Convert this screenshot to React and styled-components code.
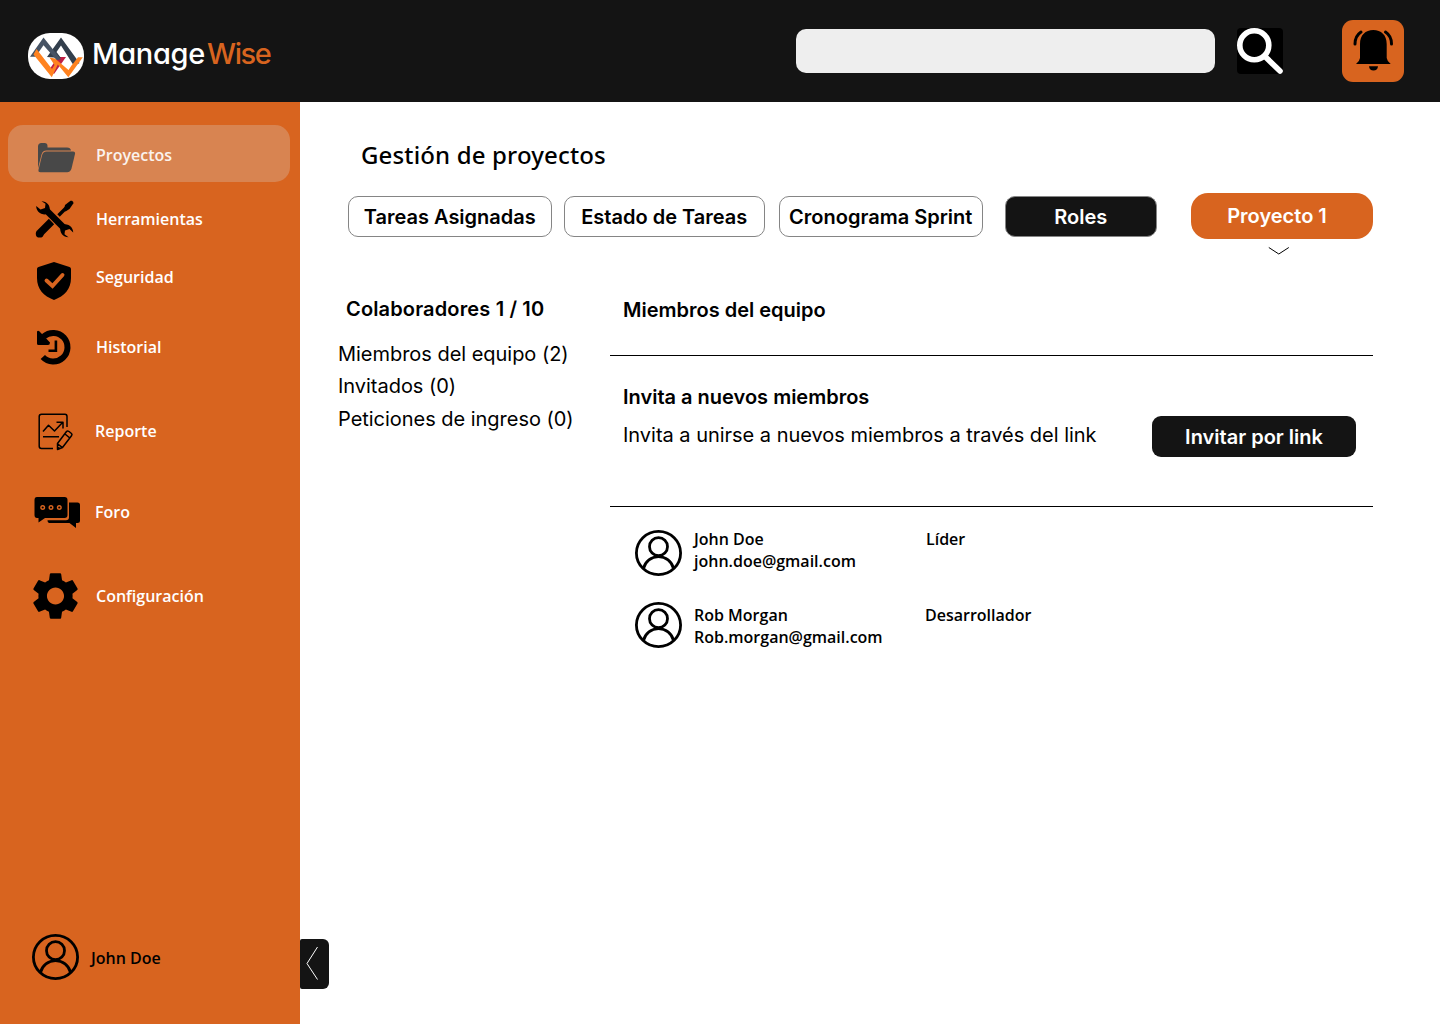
import React from 'react';
import styled, { createGlobalStyle } from 'styled-components';
import { MdSettings } from 'react-icons/md';

const ORANGE = '#d8641f';
const INK = '#141414';

const GlobalStyle = createGlobalStyle`
  * { box-sizing: border-box; }
  body { margin: 0; background: #fff; color: #000; font-family: 'Open Sans', 'Noto Sans', sans-serif; }
  button { font: inherit; color: inherit; background: none; border: 0; padding: 0; }
  h1, h2, h3, p, ul { margin: 0; padding: 0; font: inherit; }
  ul { list-style: none; }
  svg { display: block; flex: none; overflow: visible; }
`;

const Page = styled.div`
  display: grid;
  grid-template: 102px 922px / 300px 1140px;
  width: 1440px;
  height: 1024px;
  overflow: hidden;
`;

const Header = styled.header`
  grid-column: 1 / -1;
  display: flex;
  align-items: flex-start;
  background: ${INK};
`;

const Brand = styled.div`
  display: flex;
  align-items: flex-start;
  width: 796px;
  padding: 33px 0 0 28px;
`;

const Wordmark = styled.div`
  margin: 1px 0 0 8px;
  color: #fff;
  font: 500 29px/40px Inter, sans-serif;
  font-feature-settings: 'cv11' 1;
  letter-spacing: -0.3px;
  white-space: nowrap;
  span {
    margin-left: 2px;
    color: ${ORANGE};
    letter-spacing: -1.4px;
  }
`;

const SearchField = styled.input`
  width: 419px;
  height: 44px;
  margin: 29px 22px 0 0;
  border: 0;
  border-radius: 10px;
  background: #eee;
`;

const SearchButton = styled.button`
  width: 46px;
  height: 46px;
  margin: 28px 59px 0 0;
  border-radius: 4px;
  background: #000;
`;

const BellButton = styled.button`
  width: 62px;
  height: 62px;
  margin-top: 20px;
  border-radius: 11px;
  background: ${ORANGE};
`;

const Sidebar = styled.aside`
  display: flex;
  flex-direction: column;
  justify-content: space-between;
  padding: 23px 10px 44px 8px;
  background: ${ORANGE};
`;

const NavItem = styled.li`
  display: flex;
  align-items: center;
  height: ${(p) => p.$height}px;
  margin-top: ${(p) => p.$gap || 0}px;
  padding-left: 18px;
  border-radius: 15px;
  background: ${(p) => (p.$active ? 'rgba(217, 217, 217, 0.27)' : 'transparent')};
  color: ${(p) => (p.$active ? '#fbf3ee' : '#fff')};
`;

const NavLabel = styled.span`
  padding: ${(p) => p.$pad || '0'};
  margin-left: ${(p) => p.$left || 10}px;
  font-size: 16px;
  font-weight: 600;
  line-height: 22px;
`;

const Profile = styled.div`
  display: flex;
  align-items: flex-end;
  gap: 12px;
  padding-left: 24px;
  font-size: 16px;
  font-weight: 600;
  line-height: 22px;
  span { padding-bottom: 11px; }
`;

const Main = styled.main`
  display: grid;
  grid-template-columns: 38px 1fr;
`;

const CollapseButton = styled.button`
  width: 29px;
  height: 50px;
  margin-top: 837px;
  border-radius: 2px 6px 6px 2px;
  background: ${INK};
`;

const Content = styled.div`
  padding-top: 36px;
`;

const Title = styled.h1`
  padding-left: 23px;
  font: 500 24px/34px 'Noto Sans', 'Open Sans', sans-serif;
  letter-spacing: 0.15px;
`;

const Tabs = styled.nav`
  display: flex;
  align-items: flex-start;
  padding: 21px 0 0 10px;
`;

const Tab = styled.button`
  width: ${(p) => p.$width}px;
  height: 41px;
  margin: 3px ${(p) => p.$after}px 0 0;
  padding-right: 0.5px;
  border: 1px solid #858585;
  border-radius: 10px;
  background: ${(p) => (p.$active ? INK : '#fff')};
  color: ${(p) => (p.$active ? '#fff' : '#000')};
  font: 600 20px/24px Inter, sans-serif;
  white-space: nowrap;
`;

const ProjectPicker = styled.div`
  width: 182px;
  svg { margin: 8px 0 0 77px; }
`;

const ProjectButton = styled.button`
  width: 182px;
  height: 46px;
  padding-right: 10px;
  border-radius: 17px;
  background: ${ORANGE};
  color: #fff;
  font: 600 20px/24px Inter, sans-serif;
`;

const Columns = styled.div`
  display: grid;
  grid-template-columns: 272px 763px;
  padding-top: 42px;
`;

const Heading = styled.h2`
  padding-left: ${(p) => p.$left}px;
  font: 600 20px/24px Inter, sans-serif;
  letter-spacing: ${(p) => p.$spacing || '0'};
`;

const Summary = styled.section`
  ul { padding-top: 21px; }
  li {
    padding-bottom: 8px;
    font: 400 20px/24px Inter, sans-serif;
    letter-spacing: -0.03px;
    white-space: nowrap;
  }
  li + li { padding-bottom: 9px; }
`;

const Team = styled.section`
  padding-top: 1px;
`;

const InviteBlock = styled.div`
  display: flex;
  justify-content: space-between;
  height: 152px;
  margin-top: 33px;
  padding: 29px 17px 0 0;
  border: solid #000;
  border-width: 1px 0;
`;

const InviteText = styled.p`
  padding: 14px 0 0 13px;
  font: 400 20px/24px Inter, sans-serif;
  letter-spacing: -0.02px;
  white-space: nowrap;
`;

const InviteButton = styled.button`
  width: 204px;
  height: 41px;
  margin-top: 31px;
  border-radius: 9px;
  background: ${INK};
  color: #fff;
  font: 600 20px/24px Inter, sans-serif;
`;

const Member = styled.li`
  display: grid;
  grid-template-columns: 59px ${(p) => p.$roleAt}px 1fr;
  height: 46px;
  margin-top: ${(p) => p.$gap}px;
  padding-left: 25px;
  font-size: 16px;
  font-weight: 600;
  line-height: 22px;
`;

const MemberText = styled.p`
  margin-top: ${(p) => p.$top}px;
  white-space: nowrap;
`;

function Logo() {
  return (
    <svg width="56" height="46" viewBox="0 0 56 46">
      <rect width="56" height="46" rx="22" fill="#fff" />
      <path d="M30 24H38L26 41 21 37Z" fill="#c01f45" />
      <path d="M19 24 33 4.500 51.500 30 46 33 33 12.500 28.500 19 33 25Z" fill="#323e4c" />
      <path d="M2 23.700 15.500 4.500 33 26.500 28.500 27 15.500 12.300 7.500 23.700Z" fill="#465364" />
      <path d="M5.500 21.500 8.500 16 24 36 26.500 32 21.500 24.500 27 25.500 40.500 37 43.500 32.500 50 24.300H54.800L40.300 44.300 29.800 31.500 23.800 44.300Z" fill="#ff821f" />
    </svg>
  );
}

function UserIcon() {
  return (
    <svg width="47" height="46" viewBox="0 0 47 46" fill="none" stroke="#000" strokeWidth="2.800">
      <ellipse cx="23.500" cy="23" rx="22.100" ry="21.700" />
      <circle cx="23.500" cy="16.700" r="9" />
      <path d="M8.500 38.500A15.400 15.400 0 0 1 38.500 38.500" />
    </svg>
  );
}

const Icon = ({ children }) => (
  <svg width="60" height="56" viewBox="0 0 60 56">{children}</svg>
);

const FolderIcon = () => (
  <Icon>
    <g fill="#484848" transform="translate(0 .5)">
      <path d="M12 42V20q0-3.500 3.500-3.500h3q3 0 3 3V21H41q3.500 0 4 3H20.500q-4 0-5 4Z" />
      <path d="M20.500 25H47q2.500 0 2 2.500L45.500 42q-.9 3.700-4.500 3.700H14.500q-2.500 0-2-2.500L16 29q1-4 4.500-4Z" />
    </g>
  </Icon>
);

const ToolsIcon = () => (
  <Icon>
    <path d="M25.500 30.500 14 42" stroke="#000" strokeWidth="7.500" />
    <circle cx="13.700" cy="42.700" r="3.900" />
    <path d="M32.500 24.500 40.500 16.500" stroke="#000" strokeWidth="3.400" />
    <path d="M38 19 39 14 44.500 9.800H46L47.300 11V12.500L43.500 18 39.500 20.500Z" />
    <path d="M19 18 39 38" stroke="#000" strokeWidth="6.500" />
    <path d="M15.500 10.200A8.200 8.200 0 0 1 23.500 20.500L21 23A8.200 8.200 0 0 1 10.200 15L14.500 18.500 19 17 19.500 12.800Z" />
    <path d="M42.500 46.300A8.200 8.200 0 0 1 34.500 36L37 33.500A8.200 8.200 0 0 1 47.200 41.500L43.500 38 39 39.500 38.500 43.300Z" />
  </Icon>
);

const ShieldIcon = () => (
  <Icon>
    <path d="M28 13 43.500 18Q45 18.300 45 20V29C45 40 38.500 47 28 51 17.500 47 11 40 11 29V20Q11 18.300 12.500 18Z" />
    <path d="M20.500 31.500 26.500 37 36.500 26" fill="none" stroke={ORANGE} strokeWidth="3.900" strokeLinecap="round" />
  </Icon>
);

const HistoryIcon = () => (
  <Icon>
    <path d="M16.800 38A14.300 14.300 0 1 0 17.700 17.500" fill="none" stroke="#000" strokeWidth="6" />
    <path d="M11 12.500Q12 11 13.300 12.300L24 23.500Q24 26 22 26H12.500Q11 26 11 24.500Z" />
    <path d="M29.900 21.500V31.800H22.500" fill="none" stroke="#000" strokeWidth="2.600" />
  </Icon>
);

const ReportIcon = () => (
  <Icon>
    <g fill="none" stroke="#000" strokeWidth="1.500" strokeLinejoin="round">
      <path d="M27 45.500H15.500Q13.200 45.500 13.200 43.300V13.500Q13.200 11.200 15.500 11.200H39Q41 11.200 41 13.500V24" />
      <path d="M17 28.500 22.500 22.300 28.500 28 37 19M30.500 19.300H37V25.500M17 33.700H33" />
      <path d="M31.500 46.500V40.500L40.500 28.500Q41.500 27.500 43 28.500L45.500 30.500Q46.500 31.500 45.500 32.800L36.500 44.500ZM39 31 43.500 34.800M31.800 41 36.200 44.300M31.600 44.300 34 45.500" />
    </g>
  </Icon>
);

const ForumIcon = () => (
  <Icon>
    <g transform="translate(0 1)">
      <path d="M43 17.500H51.500Q54 17.500 54 20V35.500Q54 38 51.500 38H50V43L43.500 38H24Q21.500 38 21.500 35.200H40Q43 35.200 43 32Z" />
      <path d="M11 12H38.500Q41.500 12 41.500 15V30Q41.500 33 38.500 33H19L12.500 37.500V33H11Q8.500 33 8.500 30V15Q8.500 12 11 12Z" />
      <g fill="none" stroke={ORANGE} strokeWidth="1.400">
        <circle cx="16.700" cy="22.500" r="1.800" />
        <circle cx="25" cy="22.500" r="1.800" />
        <circle cx="33.300" cy="22.500" r="1.800" />
      </g>
    </g>
  </Icon>
);

const GearIcon = () => (
  <Icon><MdSettings x="1" y="-0.500" size={57} color="#000" /></Icon>
);

const NAV = [
  { label: 'Proyectos', icon: FolderIcon, height: 57, active: true, pad: '3px 0 0' },
  { label: 'Herramientas', icon: ToolsIcon, height: 58, gap: 8 },
  { label: 'Seguridad', icon: ShieldIcon, height: 58 },
  { label: 'Historial', icon: HistoryIcon, height: 58, gap: 12 },
  { label: 'Reporte', icon: ReportIcon, height: 58, gap: 26, left: 9 },
  { label: 'Foro', icon: ForumIcon, height: 58, gap: 23, left: 9 },
  { label: 'Configuración', icon: GearIcon, height: 58, gap: 26 },
];

const TABS = [
  { label: 'Tareas Asignadas', width: 204, after: 12 },
  { label: 'Estado de Tareas', width: 201, after: 14 },
  { label: 'Cronograma Sprint', width: 204, after: 22 },
  { label: 'Roles', width: 152, after: 34, active: true },
];

const MEMBERS = [
  { name: 'John Doe', email: 'john.doe@gmail.com', role: 'Líder', gap: 23, top: -2, roleAt: 232 },
  { name: 'Rob Morgan', email: 'Rob.morgan@gmail.com', role: 'Desarrollador', gap: 26, top: 2, roleAt: 231 },
];

export default function App() {
  return (
    <Page>
      <GlobalStyle />
      <Header>
        <Brand>
          <Logo />
          <Wordmark>Manage<span>Wise</span></Wordmark>
        </Brand>
        <SearchField aria-label="Buscar" />
        <SearchButton aria-label="Buscar">
          <svg width="46" height="46" viewBox="0 0 46 46" fill="none" stroke="#fff">
            <circle cx="17.300" cy="17.300" r="14.500" strokeWidth="5.600" />
            <path d="M28 28.500 43 43" strokeWidth="5.600" strokeLinecap="round" />
          </svg>
        </SearchButton>
        <BellButton aria-label="Notificaciones">
          <svg width="62" height="62" viewBox="0 0 62 62">
            <path d="M18 24C18 15 23.500 10 31.300 10S44.700 15 44.700 24V38Q45 41 48.700 44H14Q17.700 41 18 38ZM27 46.200H36Q35.500 50.500 31.500 50.500T27 46.200Z" />
            <path d="M13 24Q13 16 19 12M49.500 24Q49.500 16 43.500 12" fill="none" stroke="#000" strokeWidth="3" strokeLinecap="round" />
          </svg>
        </BellButton>
      </Header>

      <Sidebar>
        <ul>
          {NAV.map(({ label, icon: Glyph, height, gap, active, pad, left }) => (
            <NavItem key={label} $height={height} $gap={gap} $active={active}>
              <Glyph />
              <NavLabel $pad={pad} $left={left}>{label}</NavLabel>
            </NavItem>
          ))}
        </ul>
        <Profile><UserIcon /><span>John Doe</span></Profile>
      </Sidebar>

      <Main>
        <CollapseButton aria-label="Contraer menú">
          <svg width="29" height="50" viewBox="0 0 29 50" fill="none" stroke="#fff">
            <path d="M17.500 8 7 24.500 17.500 40.500" />
          </svg>
        </CollapseButton>
        <Content>
          <Title>Gestión de proyectos</Title>
          <Tabs>
            {TABS.map((t) => (
              <Tab key={t.label} $width={t.width} $after={t.after} $active={t.active}>{t.label}</Tab>
            ))}
            <ProjectPicker>
              <ProjectButton>Proyecto 1</ProjectButton>
              <svg width="21" height="8" viewBox="0 0 21 8" fill="none" stroke="#000"><path d="M.8.500 10.800 7 20.800.500" /></svg>
            </ProjectPicker>
          </Tabs>
          <Columns>
            <Summary>
              <Heading $left={8} $spacing="0.15px">Colaboradores 1 / 10</Heading>
              <ul>
                <li>Miembros del equipo (2)</li>
                <li>Invitados (0)</li>
                <li>Peticiones de ingreso (0)</li>
              </ul>
            </Summary>
            <Team>
              <Heading $left={13}>Miembros del equipo</Heading>
              <InviteBlock>
                <div>
                  <Heading as="h3" $left={13}>Invita a nuevos miembros</Heading>
                  <InviteText>Invita a unirse a nuevos miembros a través del link</InviteText>
                </div>
                <InviteButton>Invitar por link</InviteButton>
              </InviteBlock>
              <ul>
                {MEMBERS.map((m) => (
                  <Member key={m.name} $gap={m.gap} $roleAt={m.roleAt}>
                    <UserIcon />
                    <MemberText $top={m.top}>{m.name}<br />{m.email}</MemberText>
                    <MemberText $top={m.top}>{m.role}</MemberText>
                  </Member>
                ))}
              </ul>
            </Team>
          </Columns>
        </Content>
      </Main>
    </Page>
  );
}
